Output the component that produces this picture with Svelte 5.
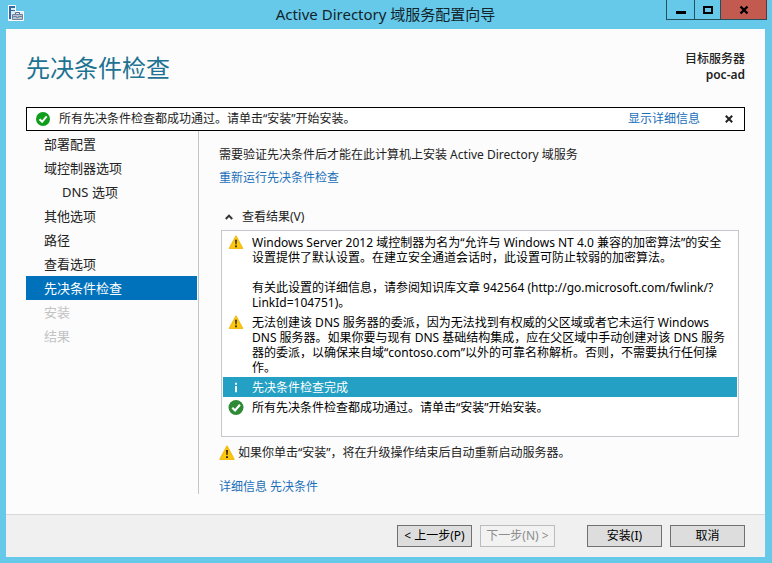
<script lang="ts">
	interface Step {
		label: string;
		state?: 'current' | 'disabled';
		child?: boolean;
	}

	interface Result {
		kind: 'warning' | 'info' | 'success';
		text: string;
	}

	const steps: Step[] = [
		{ label: '部署配置' },
		{ label: '域控制器选项' },
		{ label: 'DNS 选项', child: true },
		{ label: '其他选项' },
		{ label: '路径' },
		{ label: '查看选项' },
		{ label: '先决条件检查', state: 'current' },
		{ label: '安装', state: 'disabled' },
		{ label: '结果', state: 'disabled' }
	];

	const results: Result[] = [
		{
			kind: 'warning',
			text: 'Windows Server 2012 域控制器为名为“允许与 Windows NT 4.0 兼容的加密算法”的安全设置提供了默认设置。在建立安全通道会话时，此设置可防止较弱的加密算法。\n\n有关此设置的详细信息，请参阅知识库文章 942564 (http://go.microsoft.com/fwlink/?LinkId=104751)。'
		},
		{
			kind: 'warning',
			text: '无法创建该 DNS 服务器的委派，因为无法找到有权威的父区域或者它未运行 Windows DNS 服务器。如果你要与现有 DNS 基础结构集成，应在父区域中手动创建对该 DNS 服务器的委派，以确保来自域“contoso.com”以外的可靠名称解析。否则，不需要执行任何操作。'
		},
		{ kind: 'info', text: '先决条件检查完成' },
		{ kind: 'success', text: '所有先决条件检查都成功通过。请单击“安装”开始安装。' }
	];

	let showNotice = true;
	let open = true;
	let selected = 2;
</script>

{#snippet warningIcon()}
	<svg class="icon" viewBox="0 0 16 16" aria-hidden="true">
		<path d="M8 1.2 15 14.3H1z" fill="#fcc90c" stroke="#f5bd16" stroke-width="1.4" stroke-linejoin="round" />
		<path d="M7 5h2l-.4 5H7.4zM7 11.2h2v1.9H7z" fill="#33230a" />
	</svg>
{/snippet}

{#snippet checkIcon(color: string)}
	<svg class="icon" viewBox="0 0 16 16" aria-hidden="true">
		<circle cx="8" cy="8" r="8" fill={color} />
		<path d="M4 8.2 7 11.2 12.2 5" fill="none" stroke="#fff" stroke-width="2.3" />
	</svg>
{/snippet}

<div class="window">
	<header class="titlebar">
		<svg class="app-icon" viewBox="0 0 16 16" aria-hidden="true">
			<path d="M.5.5h7v6h8v9H.5z" fill="#dcebf5" stroke="#fff" />
			<path d="M1 1h6v2H3v2h4v1H3v8H1z" fill="#2d6ca8" />
			<path d="M7.5 9V7.5h4V9" fill="none" stroke="#5d6c85" />
			<path d="M4.5 9.5h10v5h-10z" fill="#b7c2d3" stroke="#71819c" />
			<path d="M4.5 11.5h4v1h2v-1h4" fill="none" stroke="#71819c" />
		</svg>
		<h1>Active Directory 域服务配置向导</h1>
		<div class="controls">
			<button class="min" aria-label="最小化">
				<svg width="10" height="10" viewBox="0 0 10 10"><path d="M0 6h10v3H0z" /></svg>
			</button>
			<button class="max" aria-label="最大化">
				<svg width="10" height="10" viewBox="0 0 10 10"><path d="M1 2h8v6H1z" fill="none" stroke="#000" stroke-width="2" /></svg>
			</button>
			<button class="close" aria-label="关闭">
				<svg width="10" height="10" viewBox="0 0 10 10"><path d="M1.5 1.5l7 7M8.5 1.5l-7 7" stroke="#000" stroke-width="2.4" /></svg>
			</button>
		</div>
	</header>

	<div class="page">
		<div class="heading">
			<h2>先决条件检查</h2>
			<div class="target">
				<div>目标服务器</div>
				<strong>poc-ad</strong>
			</div>
		</div>

		{#if showNotice}
			<div class="notice">
				{@render checkIcon('#0f9d1c')}
				<span class="message">所有先决条件检查都成功通过。请单击“安装”开始安装。</span>
				<a href="#details">显示详细信息</a>
				<button class="dismiss" aria-label="关闭通知" on:click={() => (showNotice = false)}>
					<svg width="8" height="8" viewBox="0 0 8 8"><path d="M.8.8l6.4 6.4M7.2.8L.8 7.2" stroke="#222" stroke-width="2" /></svg>
				</button>
			</div>
		{/if}

		<div class="body">
			<nav>
				{#each steps as step}
					<button
						class="step"
						class:child={step.child}
						class:current={step.state === 'current'}
						disabled={step.state === 'disabled'}
					>
						{step.label}
					</button>
				{/each}
			</nav>

			<main>
				<p class="intro">需要验证先决条件后才能在此计算机上安装 Active Directory 域服务</p>
				<a class="rerun" href="#rerun">重新运行先决条件检查</a>
				<button class="expander" aria-expanded={open} on:click={() => (open = !open)}>
					<svg class:closed={!open} width="8" height="6" viewBox="0 0 8 6">
						<path d="M.8 5 4 1.6 7.2 5" fill="none" stroke="#333" stroke-width="2" />
					</svg>
					查看结果(V)
				</button>
				<div class="results">
					{#if open}
						{#each results as result, i}
							<button class="result" class:selected={selected === i} on:click={() => (selected = i)}>
								{#if result.kind === 'warning'}
									{@render warningIcon()}
								{:else if result.kind === 'success'}
									{@render checkIcon('#2f8a35')}
								{:else}
									<svg class="icon" viewBox="0 0 16 16" aria-hidden="true">
										<path d="M7 3h2v2H7zM7 6.5h2V13H7z" fill="#fff" />
									</svg>
								{/if}
								<span>{result.text}</span>
							</button>
						{/each}
					{/if}
				</div>
				<div class="restart">
					{@render warningIcon()}
					<span>如果你单击“安装”，将在升级操作结束后自动重新启动服务器。</span>
				</div>
				<a class="more" href="#more">详细信息 先决条件</a>
			</main>
		</div>

		<footer>
			<button>&lt; 上一步(P)</button>
			<button disabled>下一步(N) &gt;</button>
			<button class="install">安装(I)</button>
			<button>取消</button>
		</footer>
	</div>
</div>

<style>
	:global(body) {
		margin: 0;
	}

	.window {
		display: flex;
		flex-direction: column;
		box-sizing: border-box;
		min-height: 100vh;
		padding: 0 7px 6px 6px;
		background: #66c9ea;
		color: #222;
		font-family: 'Noto Sans', 'Noto Sans CJK SC', sans-serif;
		font-size: 12px;
		line-height: 16px;
	}

	button {
		margin: 0;
		padding: 0;
		border: 0;
		background: none;
		color: inherit;
		font: inherit;
	}

	a {
		color: #1a6fba;
		text-decoration: none;
	}

	.icon {
		flex: none;
		width: 16px;
		height: 16px;
	}

	.titlebar {
		display: grid;
		grid-template-columns: 1fr auto 1fr;
		align-items: start;
		height: 29px;
	}

	.app-icon {
		width: 16px;
		height: 16px;
		margin: 5px 2px;
	}

	h1 {
		margin: 3px 0 0;
		color: #12242c;
		font-size: 15px;
		font-weight: normal;
		line-height: 22px;
	}

	.controls {
		display: flex;
		justify-self: end;
		margin-right: -2px;
	}

	.controls button {
		display: flex;
		align-items: center;
		justify-content: center;
		box-sizing: border-box;
		width: 28px;
		height: 20px;
		border: 1px solid #23505f;
		border-top: 0;
		border-right: 0;
	}

	.controls .max {
		width: 26px;
	}

	.controls .close {
		width: 47px;
		border-right: 1px solid #6b2f2d;
		background: #c35a50;
	}

	.page {
		display: flex;
		flex: 1;
		flex-direction: column;
		background: #fcfcfc;
	}

	.heading {
		display: flex;
		justify-content: space-between;
		padding: 22px 20px 23px;
	}

	h2 {
		margin: 0;
		color: #1d7391;
		font-size: 24px;
		font-weight: normal;
		line-height: 33px;
	}

	.target {
		font-weight: 500;
		text-align: right;
	}

	.target strong {
		display: block;
		font-weight: 600;
	}

	.notice {
		display: flex;
		align-items: center;
		box-sizing: border-box;
		height: 24px;
		margin: 0 20px;
		padding: 0 11px 0 9px;
		border: 1px solid #000;
		background: #fff;
	}

	.notice .icon {
		width: 14px;
		height: 14px;
	}

	.message {
		flex: 1;
		margin-left: 9px;
	}

	.dismiss {
		display: flex;
		margin-left: 25px;
	}

	.body {
		display: flex;
		flex: 1;
		margin: 0 20px 20px;
	}

	nav {
		display: flex;
		flex: none;
		flex-direction: column;
		width: 171px;
		padding: 1px 1px 0 0;
		border-right: 1px solid #c4c4c4;
	}

	.step {
		padding-left: 18px;
		font-size: 13px;
		line-height: 24px;
		text-align: left;
	}

	.step.child {
		padding-left: 36px;
	}

	.step.current {
		background: #0072bc;
		color: #fff;
	}

	.step:disabled {
		color: #c3c3c3;
	}

	main {
		display: flex;
		flex: 1;
		flex-direction: column;
		align-items: flex-start;
		min-width: 0;
		padding: 16px 6px 0 20px;
	}

	.intro {
		margin: 0 0 7px;
	}

	.rerun {
		margin-bottom: 23px;
	}

	.expander {
		display: flex;
		gap: 9px;
		align-items: center;
		margin: 0 0 5px 6px;
	}

	.closed {
		transform: rotate(180deg);
	}

	.results {
		display: flex;
		flex: 1;
		flex-direction: column;
		box-sizing: border-box;
		align-self: stretch;
		margin-left: 2px;
		padding: 1px;
		border: 1px solid #c4c8cc;
		background: #fff;
		color: #000;
	}

	.result {
		display: flex;
		gap: 8px;
		padding: 3px 5px 2px;
		line-height: 15px;
		text-align: left;
		white-space: pre-line;
	}

	.result .icon {
		height: 15px;
	}

	.result.selected {
		background: #23a0c4;
		color: #fff;
	}

	.restart {
		display: flex;
		gap: 3px;
		align-items: center;
		margin: 8px 0 18px;
	}

	.more {
		margin-bottom: -1px;
	}

	footer {
		display: flex;
		gap: 8px;
		justify-content: flex-end;
		padding: 10px 20px;
		border-top: 1px solid #d9d9d9;
		background: #f0f0f0;
	}

	footer button {
		box-sizing: border-box;
		width: 75px;
		height: 22px;
		border: 1px solid #707070;
		background: #dddddd;
		color: #000;
	}

	footer button:disabled {
		border-color: #bcbcbc;
		background: #f2f2f2;
		color: #8d8d8d;
	}

	.install {
		margin-left: 24px;
	}
</style>
